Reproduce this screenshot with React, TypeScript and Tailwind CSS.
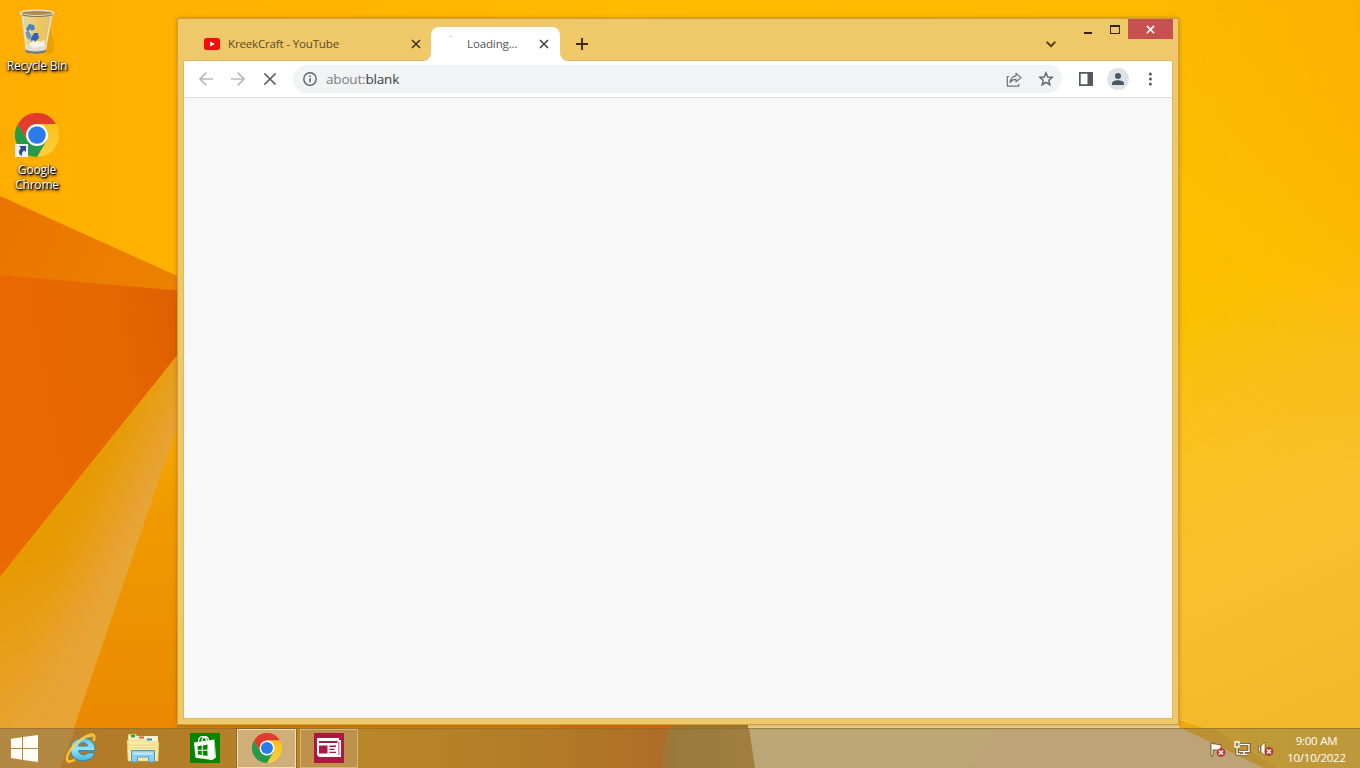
import React from "react";

function Wallpaper() {
  return (
    <svg className="absolute inset-0 h-full w-full" viewBox="0 0 1360 768" preserveAspectRatio="none">
      <defs>
        <linearGradient id="sky" x1="0" y1="0" x2="1" y2="0">
          <stop offset="0" stopColor="#ffae00" />
          <stop offset="0.45" stopColor="#ffbb00" />
          <stop offset="0.853" stopColor="#fcba00" />
          <stop offset="1" stopColor="#fbb200" />
        </linearGradient>
        <linearGradient id="right" x1="0" y1="0" x2="0.12" y2="1">
          <stop offset="0" stopColor="#fcba00" />
          <stop offset="0.42" stopColor="#fbc200" />
          <stop offset="0.56" stopColor="#fbc11e" />
          <stop offset="0.78" stopColor="#f9c02c" />
          <stop offset="1" stopColor="#f5b72b" />
        </linearGradient>
        <linearGradient id="rightEdge" x1="0" y1="0" x2="1" y2="0">
          <stop offset="0" stopColor="#fbb000" stopOpacity="0" />
          <stop offset="1" stopColor="#fbac00" stopOpacity="0.75" />
        </linearGradient>
        <linearGradient id="fade" x1="0" y1="0" x2="0" y2="1">
          <stop offset="0" stopColor="#fff" />
          <stop offset="1" stopColor="#000" />
        </linearGradient>
        <mask id="topFade">
          <rect x="1160" y="0" width="200" height="460" fill="url(#fade)" />
        </mask>
        <linearGradient id="upper" x1="0" y1="0" x2="1" y2="0.3">
          <stop offset="0" stopColor="#ea7400" />
          <stop offset="1" stopColor="#ec8100" />
        </linearGradient>
        <linearGradient id="deep" x1="0" y1="0.6" x2="1" y2="0.3">
          <stop offset="0" stopColor="#ea6900" />
          <stop offset="0.65" stopColor="#e76700" />
          <stop offset="1" stopColor="#e06000" />
        </linearGradient>
        <linearGradient id="beam" gradientUnits="userSpaceOnUse" x1="40" y1="530" x2="124" y2="569">
          <stop offset="0" stopColor="#e69a00" />
          <stop offset="0.35" stopColor="#e69c08" />
          <stop offset="0.85" stopColor="#e8a232" />
          <stop offset="1" stopColor="#e8a638" />
        </linearGradient>
        <linearGradient id="beamLow" x1="0" y1="0" x2="0" y2="1">
          <stop offset="0.55" stopColor="#e8a334" stopOpacity="0" />
          <stop offset="1" stopColor="#e8a334" stopOpacity="0.8" />
        </linearGradient>
        <linearGradient id="low" x1="0" y1="0" x2="0" y2="1">
          <stop offset="0" stopColor="#f5ad00" />
          <stop offset="0.3" stopColor="#f09b00" />
          <stop offset="1" stopColor="#eb8900" />
        </linearGradient>
        <linearGradient id="barWarm" x1="0" y1="0" x2="1" y2="0">
          <stop offset="0" stopColor="#b0772b" />
          <stop offset="0.15" stopColor="#b37f28" />
          <stop offset="0.27" stopColor="#b98728" />
          <stop offset="0.38" stopColor="#b17d27" />
          <stop offset="0.45" stopColor="#b07428" />
          <stop offset="0.49" stopColor="#ae6b29" />
        </linearGradient>
        <linearGradient id="barRight" x1="0" y1="0" x2="1" y2="0">
          <stop offset="0" stopColor="#c29a34" />
          <stop offset="1" stopColor="#bd983a" />
        </linearGradient>
        <linearGradient id="barOlive" x1="0" y1="0" x2="1" y2="0">
          <stop offset="0" stopColor="#ab712d" />
          <stop offset="0.15" stopColor="#987b3d" />
          <stop offset="1" stopColor="#a17f41" />
        </linearGradient>
      </defs>
      <rect width="1360" height="768" fill="url(#sky)" />
      <rect x="1160" width="200" height="768" fill="url(#right)" />
      <rect x="1160" width="200" height="460" fill="url(#rightEdge)" mask="url(#topFade)" />
      <path d="M0 196 184 279V300H0Z" fill="url(#upper)" />
      <path d="M0 275 184 291V347L0 577Z" fill="url(#deep)" />
      <path d="M0 577 184 347V410L74 728H0Z" fill="url(#beam)" />
      <path d="M0 577 184 347V410L74 728H0Z" fill="url(#beamLow)" />
      <path d="M184 407V728H74Z" fill="url(#low)" />
      <path d="M177 725H560V728H177Z" fill="#d07c08" />
      <path d="M560 725H672V728H560Z" fill="#d76a08" />
      <path d="M672 725H748V728H672Z" fill="#9d7b32" />
      <path d="M748 725H1180L1194 728H748Z" fill="#ead59c" />
      <path d="M1179 720 1202 728H1179Z" fill="#eda912" />
      <rect y="728" width="1360" height="40" fill="url(#barWarm)" />
      <path d="M0 728H76L60 768H0Z" fill="#b38842" />
      <path d="M668 728H749L755 768H660Z" fill="url(#barOlive)" />
      <path d="M749 728H1360V768H755Z" fill="#bda776" />
      <path d="M1000 728H1190L1265 768H970Z" fill="#bba276" opacity="0.5" />
      <path d="M1181 728H1360V768H1264Z" fill="url(#barRight)" />
      <path d="M1181 728H1212L1278 768H1264Z" fill="#b98d36" opacity="0.7" />
      <path d="M0 728.5H1360" stroke="#8f6a27" strokeOpacity="0.65" />
    </svg>
  );
}

function ChromeLogo({ className }: { className: string }) {
  return (
    <svg className={className} viewBox="0 0 48 48">
      <defs>
        <linearGradient id="chromeYellow" x1="0" y1="0" x2="0" y2="1">
          <stop offset="0" stopColor="#fbc116" />
          <stop offset="1" stopColor="#fbd043" />
        </linearGradient>
      </defs>
      <path d="M24 24 3.2 12A24 24 0 0 1 44.8 12H24Z" fill="#e33b2e" />
      <path d="M44.8 12A24 24 0 0 1 24 48L34.4 30 24 12Z" fill="url(#chromeYellow)" />
      <path d="M3.2 12A24 24 0 0 0 24 48L34.4 30 13.6 30Z" fill="#269a48" />
      <path d="M3.2 12 13.6 30 24 24V12Z" fill="#e33b2e" />
      <circle cx="24" cy="24" r="12" fill="#fff" />
      <circle cx="24" cy="24" r="9.6" fill="#2b7bea" />
    </svg>
  );
}

function RecycleBin() {
  return (
    <svg className="h-[48px] w-[40px]" viewBox="0 0 40 48">
      <defs>
        <linearGradient id="glass" x1="0" y1="0" x2="1" y2="0">
          <stop offset="0" stopColor="#d0cbb0" />
          <stop offset="0.2" stopColor="#e6d490" />
          <stop offset="0.6" stopColor="#eec65a" />
          <stop offset="1" stopColor="#d5c28b" />
        </linearGradient>
      </defs>
      <path d="m32 15 6 28-4 5-6 1Z" fill="#ce9100" opacity=".45" />
      <path d="M4 7 8.500 45C10 48.500 27 48.500 28.500 45L36.500 7Z" fill="url(#glass)" />
      <path d="M7.900 40C12 37 25 36 29.700 39L28.500 45C27 48.500 10 48.500 8.500 45Z" fill="#dddcd0" />
      <path d="M8.300 43.500C12 46 25 46 29 43.500L28.500 46C26 48.500 11 48.500 8.600 46Z" fill="#777b75" />
      <path d="m12 38 6-4 5 2 5-2-1 6-11 2Z" fill="#f6f4e8" />
      <path d="m9 23 3-5 5 1 1 4-3 2-2-2-2 3Z" fill="#4a80c4" />
      <path d="m8.500 26 3-1 3 5-2 4-3-3Z" fill="#6c97c4" />
      <path d="m14 32 3-5 4 0 1 5-4 4-1-2-3 1Z" fill="#2d63b8" />
      <path d="m5.500 9 4 32M34.500 9l-6 34" fill="none" stroke="#efeddd" strokeWidth="1.200" opacity=".8" />
      <ellipse cx="20" cy="7" rx="16.500" ry="2.800" fill="#ae8b4d" stroke="#dedfda" strokeWidth="1.600" />
      <path d="M5 8.800C12 11 28 11 35.500 8.800" fill="none" stroke="#71685d" strokeWidth="1" />
    </svg>
  );
}

const labelClass =
  "text-center text-[12px] leading-[15px] tracking-[-0.2px] text-white [text-shadow:1px_1px_1px_#000,0_1px_3px_#000,1px_2px_3px_#0009]";

function DesktopIcons() {
  return (
    <div className="relative flex w-[74px] flex-col items-center pt-[6px]">
      <RecycleBin />
      <div className={labelClass + " mt-[4px] whitespace-nowrap"}>Recycle Bin</div>
      <div className="relative mt-[40px] mr-[1px] h-[44px] w-[44px]">
        <ChromeLogo className="h-[44px] w-[44px]" />
        <svg className="absolute bottom-0 left-0 h-[13px] w-[13px]" viewBox="0 0 13 13">
          <rect width="13" height="13" fill="#f0f2f4" />
          <path d="M4 2h7v6L9 6.500C7 8 6.500 9.500 7 12 3 10.500 3.500 6.500 6 4Z" fill="#244b93" />
        </svg>
      </div>
      <div className={labelClass + " mt-[5px]"}>
        Google
        <br />
        Chrome
      </div>
    </div>
  );
}

function Cross({ className, width }: { className: string; width: number }) {
  return (
    <svg className={className} viewBox="0 0 10 10" fill="none" stroke="currentColor" strokeWidth={width}>
      <path d="m1 1 8 8M9 1 1 9" />
    </svg>
  );
}

function TitleBar() {
  return (
    <div className="flex h-[42px] shrink-0 items-start">
      <div className="mt-[8px] flex h-[34px] w-[247px] items-center pr-[10px] pl-[20px] text-[#5b4a25]">
        <svg className="h-[12px] w-[16px]" viewBox="0 0 16 12">
          <rect width="16" height="12" rx="2.500" fill="#f40d0d" />
          <path d="m6.200 3.400 4.600 2.600-4.600 2.600Z" fill="#fff" />
        </svg>
        <span className="ml-[8px] flex-1 text-[11.500px] tracking-[-0.15px]">KreekCraft - YouTube</span>
        <Cross className="h-[10px] w-[10px] text-[#45371d]" width={1.7} />
      </div>
      <div className="relative mt-[8px] flex h-[34px] w-[129px] items-center rounded-t-[8px] bg-white pr-[11px] pl-[36px] text-[#505356]">
        <svg className="absolute bottom-0 left-[-8px] h-[8px] w-[8px]" viewBox="0 0 8 8">
          <path d="M8 0v8H0a8 8 0 0 0 8-8Z" fill="#fff" />
        </svg>
        <svg className="absolute right-[-8px] bottom-0 h-[8px] w-[8px]" viewBox="0 0 8 8">
          <path d="M0 0v8h8a8 8 0 0 1-8-8Z" fill="#fff" />
        </svg>
        <div className="absolute top-[9px] left-[18px] h-px w-[3px] bg-[#cfd2d5]" />
        <span className="flex-1 text-[11.500px] tracking-[-0.12px]">Loading...</span>
        <Cross className="h-[10px] w-[10px] text-[#45484b]" width={1.7} />
      </div>
      <svg className="mt-[19px] ml-[16px] h-[12px] w-[12px]" viewBox="0 0 12 12" stroke="#3b2c12" strokeWidth="1.900">
        <path d="M6 0v12M0 6h12" />
      </svg>
      <div className="flex-1" />
      <svg className="mt-[22px] mr-[28px] h-[7px] w-[10px]" viewBox="0 0 10 7" fill="none" stroke="#48360f" strokeWidth="1.900">
        <path d="m.7.8 4.300 4.300L9.300.8" />
      </svg>
      <div className="mt-[13px] h-[2px] w-[8px] bg-[#35230d]" />
      <div className="mt-[6px] ml-[18px] h-[9px] w-[10px] border border-t-2 border-[#35230d]" />
      <div className="mr-[-1px] ml-[8px] flex h-[20px] w-[45px] items-center justify-center bg-[#c75050] text-white">
        <Cross className="h-[9px] w-[9px]" width={1.7} />
      </div>
    </div>
  );
}

function ToolbarSlot({ children }: { children: React.ReactNode }) {
  return <div className="flex w-8 shrink-0 items-center justify-center">{children}</div>;
}

function Toolbar() {
  return (
    <div className="flex h-[37px] shrink-0 items-center border-b border-[#d8dadd] bg-white px-[6px] text-[#5f6368]">
      <ToolbarSlot>
        <svg className="h-[14px] w-[14px]" viewBox="0 0 14 14" fill="none" stroke="#b8babd" strokeWidth="1.700">
          <path d="M14 7H1M7.300.7 1 7l6.300 6.300" />
        </svg>
      </ToolbarSlot>
      <ToolbarSlot>
        <svg className="h-[14px] w-[14px]" viewBox="0 0 14 14" fill="none" stroke="#b8babd" strokeWidth="1.700">
          <path d="M0 7h13M6.700.7 13 7l-6.300 6.300" />
        </svg>
      </ToolbarSlot>
      <ToolbarSlot>
        <svg className="h-[12px] w-[12px]" viewBox="0 0 12 12" stroke="#5f6368" strokeWidth="1.600">
          <path d="m.4.4 11.200 11.200M11.600.4.4 11.600" />
        </svg>
      </ToolbarSlot>
      <div className="mr-[8px] ml-[7px] flex h-[28px] flex-1 items-center rounded-full bg-[#f1f3f4] pl-[10px]">
        <svg className="h-[14px] w-[14px]" viewBox="0 0 14 14" fill="none" stroke="#5f6368" strokeWidth="1.400">
          <circle cx="7" cy="7" r="6.200" />
          <path d="M7 6.200v4M7 3.500V5" strokeWidth="1.600" />
        </svg>
        <span className="ml-[9px] flex-1 text-[13.500px] tracking-[-0.18px] text-[#7c8085]">
          about:<span className="text-[#3a3d41]">blank</span>
        </span>
        <ToolbarSlot>
          <svg className="h-[15px] w-[16px]" viewBox="0 0 16 15" fill="none" stroke="#6d7176" strokeWidth="1.200">
            <path d="M3.200 4.500H1.300v9.700h11.400v-2.500" />
            <path d="M10 1.300 15 5.600 10 9.800V7.400C7.400 7.300 5.500 8.200 4 10.500 4.500 6.700 6.500 4.400 10 3.900Z" strokeLinejoin="round" />
          </svg>
        </ToolbarSlot>
        <ToolbarSlot>
          <svg className="h-[16px] w-[16px]" viewBox="0 0 16 16" fill="none" stroke="#5f6368" strokeWidth="1.400">
            <path d="m8 1.900 1.750 4.100 4.450.4-3.380 2.930 1.020 4.350L8 11.370l-3.840 2.310 1.020-4.350L1.800 6.400l4.450-.4Z" />
          </svg>
        </ToolbarSlot>
      </div>
      <ToolbarSlot>
        <svg className="h-[14px] w-[14px]" viewBox="0 0 14 14">
          <path fill="#56595e" fillRule="evenodd" d="M0 0h14v14H0ZM1.700 1.700v10.600H8.500V1.700Z" />
        </svg>
      </ToolbarSlot>
      <ToolbarSlot>
        <div className="flex h-[22px] w-[22px] items-center justify-center rounded-full bg-[#dfe3e8]">
          <svg className="h-[12px] w-[12px]" viewBox="0 0 12 12" fill="#4b5665">
            <circle cx="6" cy="3" r="3" />
            <path d="M0 12v-1.700C0 8.300 3.500 7.200 6 7.200s6 1.100 6 3.100V12Z" />
          </svg>
        </div>
      </ToolbarSlot>
      <ToolbarSlot>
        <svg className="h-[14px] w-[4px]" viewBox="0 0 4 14" fill="#56595e">
          <circle cx="2.400" cy="2" r="1.500" />
          <circle cx="2.400" cy="7" r="1.500" />
          <circle cx="2.400" cy="12" r="1.500" />
        </svg>
      </ToolbarSlot>
    </div>
  );
}

function BrowserWindow() {
  return (
    <div className="absolute top-[18px] left-[177px] flex h-[707px] w-[1002px] flex-col border border-[#cf9d3e] bg-[#efc86a] px-[6px] pb-[6px] shadow-[0_0_4px_#8a5a0080]">
      <TitleBar />
      <div className="flex flex-1 flex-col bg-[#f8f8f8] outline outline-[#e0b75a]">
        <Toolbar />
      </div>
    </div>
  );
}

function WindowsLogo() {
  return (
    <svg className="h-[27px] w-[27px]" viewBox="0 0 27 27" fill="#fffdf4">
      <path d="M0 3.800 11 2.200V12.900H0ZM12 2 27 0V12.900H12ZM0 13.900H11V24.700L0 23.100ZM12 13.900H27V27L12 24.900Z" />
    </svg>
  );
}

function InternetExplorer() {
  return (
    <svg className="h-[32px] w-[32px]" viewBox="0 0 32 32" fill="none">
      <defs>
        <linearGradient id="ie" x1="0" y1="0" x2="0" y2="1">
          <stop offset="0" stopColor="#5fc3e6" />
          <stop offset="0.5" stopColor="#96e5fa" />
          <stop offset="1" stopColor="#42b4df" />
        </linearGradient>
      </defs>
      <path
        d="M30 18.500H13.500C14 23.500 21 24 22.500 21H29.500C27 32 6 32 5.500 17.500 5 2.500 31 1.500 30 18.500ZM13.600 14H22.500C22 9.500 14.500 9.500 13.600 14Z"
        fill="url(#ie)"
        fillRule="evenodd"
        stroke="#2284b3"
        strokeWidth=".9"
      />
      <path
        d="M28.500 9C31 3 28 .8 21.500 4 11 9 1 21 2 27.500 2.700 31 7 29.500 10 27.500"
        stroke="#f7c42f"
        strokeWidth="2.400"
      />
      <path d="M27.500 5C26 2 13 8 6 18" stroke="#ffe991" strokeWidth=".8" />
    </svg>
  );
}

function FileExplorer() {
  return (
    <svg className="h-[30px] w-[32px]" viewBox="0 0 32 30">
      <path d="M1 4V2l1-1h7l1 2h21v25H1Z" fill="#edd681" />
      <path d="M2 3h29v6H2Z" fill="#faf3cb" />
      <path d="M4 1.500h4v3H4Z" fill="#36a746" />
      <path d="M12 3.500h5v2h-5Z" fill="#de5a3f" />
      <path d="M20 5.500h5v2h-5Z" fill="#438bc7" />
      <path d="M0 7h20l1 2h11l-1 19H1Z" fill="#f8e9a5" stroke="#dfc675" strokeWidth=".6" />
      <path d="M1 12h30M1 15h30" stroke="#e9d37e" strokeWidth=".8" />
      <path d="M4.500 17.500h23V29h-6v-5h-11v5h-6Z" fill="#8fcdee" stroke="#4f9fca" />
      <path d="M6 19.500h20v2H6Z" fill="#c4ecfa" />
    </svg>
  );
}

function Store() {
  return (
    <svg className="h-[30px] w-[30px]" viewBox="0 0 30 30">
      <rect width="30" height="30" fill="#078500" />
      <path d="M8.500 9C8 2 16 2 16.500 8M12 8.500C12 2 19 2.500 18.500 8" fill="none" stroke="#fff" strokeWidth="1.300" />
      <path d="M4 9.500 24.500 6.500 24 26 22 27 5.500 24.700Z" fill="#fff" />
      <path d="m7.500 13.300 4.300-.7v4.200H7.700ZM12.800 12.400l4.700-.8v5.200h-4.700ZM7.700 17.800h4.100v4.300l-3.900-.6ZM12.800 17.800h4.700v5.200l-4.700-.7Z" fill="#078500" />
      <path d="m24.500 6.500 1.500 18-2 1.500Z" fill="#e9f6e8" />
    </svg>
  );
}

function News() {
  return (
    <svg className="h-[30px] w-[30px]" viewBox="0 0 30 30">
      <rect width="30" height="30" fill="#ad1742" />
      <path d="M3 5h22v2h2v17H5l-2-2Z" fill="#fff" />
      <path d="M5 8h18.500v2H5ZM5 12.500h8.500V20.500H5ZM15.500 12.500h6.500V14h-6.500ZM15.500 15.800h5V17h-5ZM15.500 18.800h6.500V20h-6.500ZM24.500 9h.8v13h-.8Z" fill="#ad1742" />
    </svg>
  );
}

function ErrorBadge() {
  return (
    <g>
      <circle cx="11" cy="10.500" r="4" fill="#cf3d35" stroke="#9e2c26" strokeWidth=".7" />
      <path d="m9 8.500 4 4M13 8.500l-4 4" stroke="#fff" strokeWidth="1.400" />
    </g>
  );
}

function Tray() {
  return (
    <div className="ml-auto flex items-center">
      <svg className="mt-[3px] h-[16px] w-[16px]" viewBox="0 0 16 16">
        <path d="M1 1h2v1c3-1 4 1.500 8 .5v6C8 9.500 6 7 3 8v6H1Z" fill="#fffdf4" stroke="#5d4220" strokeWidth=".8" />
        <ErrorBadge />
      </svg>
      <svg className="mt-[1px] ml-[8px] h-[16px] w-[17px]" viewBox="0 0 17 16" fill="none">
        <path d="M5 3.500h10v7H5M10 10.500v3M6.500 13.500h7M3 6v7h3" stroke="#5d4220" strokeWidth="3" />
        <path d="M1 1h4v5H1Z" fill="#9a7b46" stroke="#fffdf4" strokeWidth="1.400" />
        <path d="M6 3.500h9v7H5M10 10.500v3M6.500 13.500h7M3 6v7h3" stroke="#fffdf4" strokeWidth="1.400" />
      </svg>
      <svg className="mt-[1px] ml-[7px] h-[16px] w-[16px]" viewBox="0 0 16 16">
        <path d="M.5 5h1.700v6H.5ZM3 5l4-4v13.500L3 11Z" fill="#fffdf4" stroke="#5d4220" strokeWidth=".6" />
        <ErrorBadge />
      </svg>
      <div className="mt-[1px] mr-[13px] ml-[12px] w-[61px] text-center text-[11.500px] leading-[17px] tracking-[-0.25px] whitespace-nowrap text-white">
        9:00 AM
        <br />
        10/10/2022
      </div>
    </div>
  );
}

function Taskbar() {
  return (
    <div className="relative flex h-[40px] items-center">
      <div className="flex w-[50px] justify-center pr-[2px]">
        <WindowsLogo />
      </div>
      <div className="flex w-[62px] justify-center">
        <InternetExplorer />
      </div>
      <div className="flex w-[62px] justify-center">
        <FileExplorer />
      </div>
      <div className="flex w-[62px] justify-center">
        <Store />
      </div>
      <div className="ml-[1px] flex h-[39px] w-[59px] items-center justify-center border border-[#f3dfad] bg-[#cfae79] outline outline-[#76531f80]">
        <ChromeLogo className="h-[30px] w-[30px]" />
      </div>
      <div className="ml-[4px] flex h-[39px] w-[58px] items-center justify-center border border-[#d8b778] bg-[#bd9149]">
        <News />
      </div>
      <Tray />
    </div>
  );
}

export default function App() {
  return (
    <div className="relative flex h-[768px] w-[1360px] flex-col overflow-hidden bg-[#ffb700] font-['Open_Sans','Noto_Sans',sans-serif]">
      <Wallpaper />
      <div className="flex-1">
        <DesktopIcons />
      </div>
      <BrowserWindow />
      <Taskbar />
    </div>
  );
}
